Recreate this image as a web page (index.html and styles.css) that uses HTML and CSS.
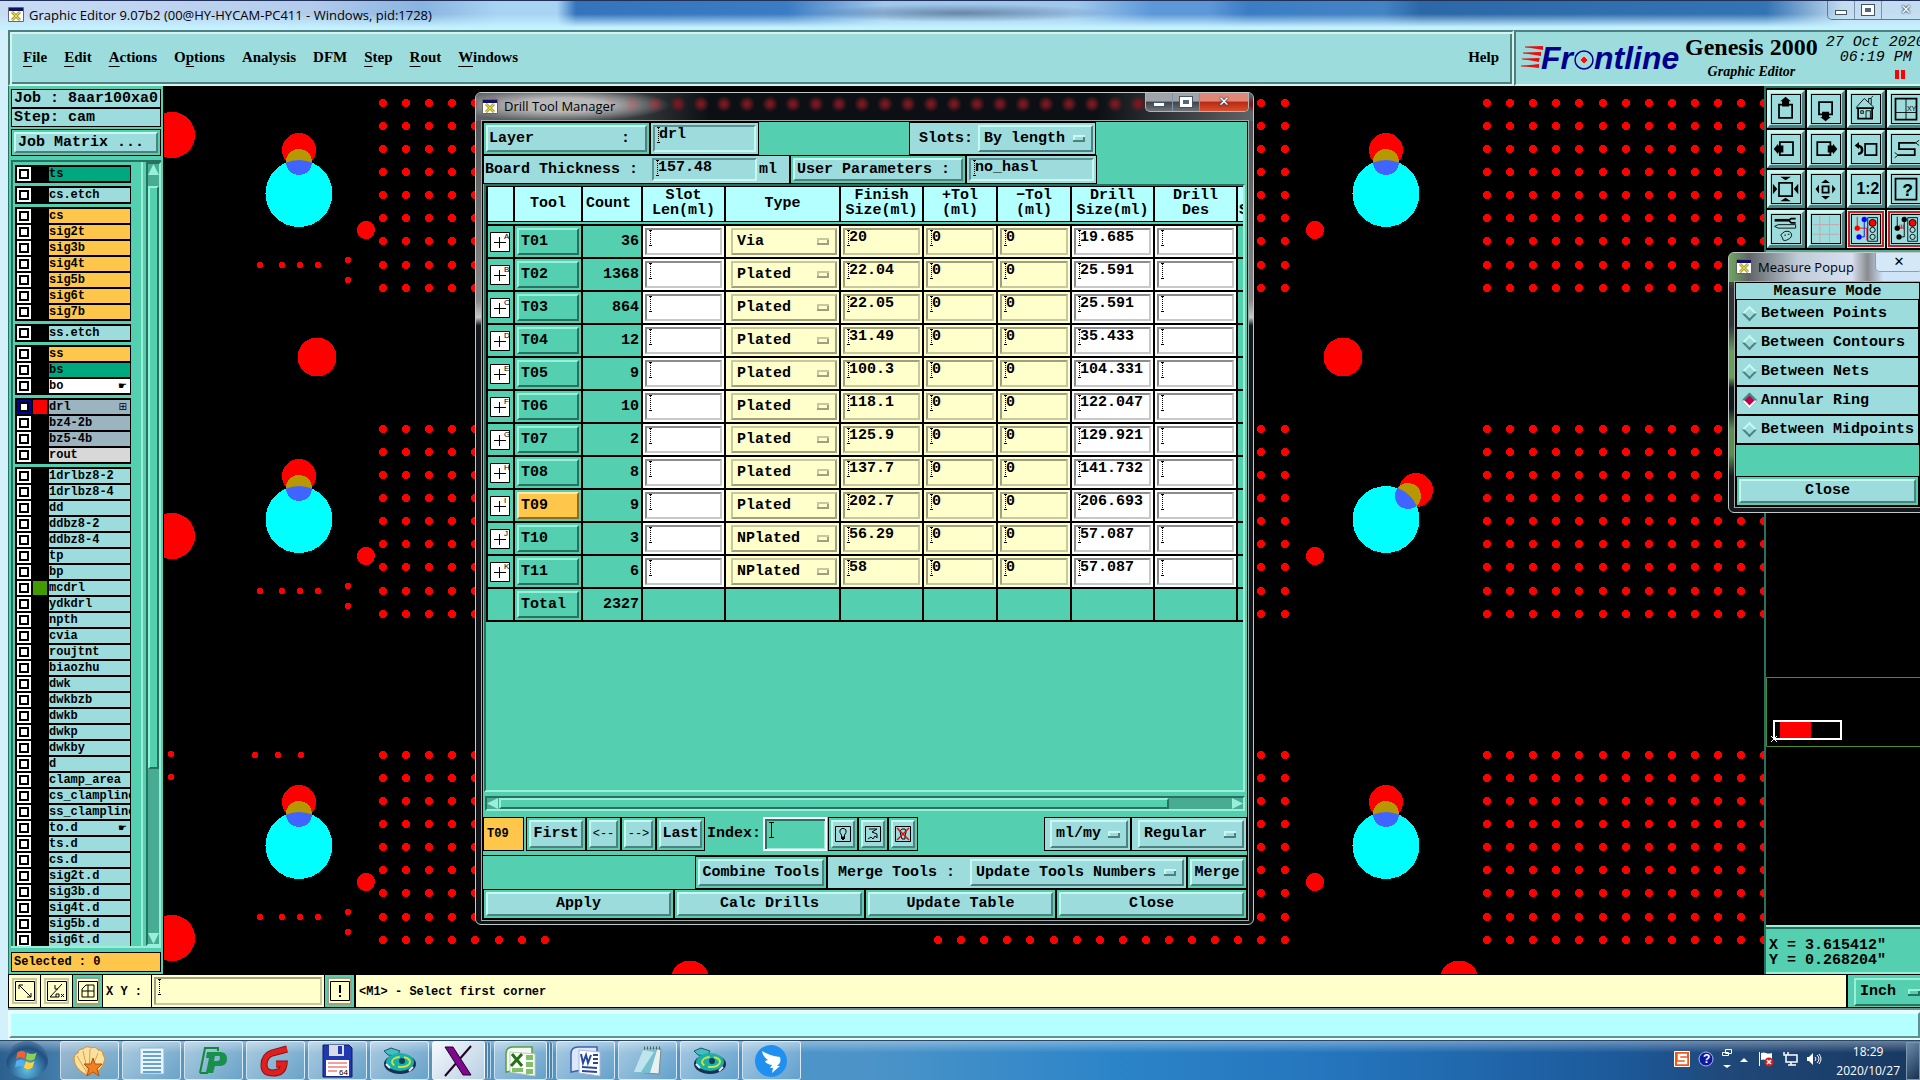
FILE: index.html
```html
<!DOCTYPE html>
<html lang="en">
<head>
    <meta charset="UTF-8">
    <meta name="viewport" content="width=device-width, initial-scale=1.0">
    <title>Graphic Editor</title>
    <link rel="stylesheet" href="styles.css">
</head>
<body>
    <svg class="defs" aria-hidden="true">
        <symbol id="x-app" viewBox="0 0 16 15">
            <path fill="#fff" stroke="#666" d="M.5.5h15v14H.5z"/>
            <path fill="#10106a" d="M1 1h14v3H1z"/>
            <path stroke="#8c8420" stroke-width="2.6" d="M4 5l8 8M12 5l-8 8"/>
            <path stroke="#e8dc40" stroke-width="1.2" d="M4 5l8 8M12 5l-8 8"/>
        </symbol>
        <symbol id="disc" viewBox="0 0 34 34">
            <path fill="#3fc0c0" stroke="#285070" d="M1 7l7-3 9 3-3 5-9-1z"/>
            <ellipse cx="17" cy="20" rx="16" ry="10" fill="#1c2c50"/>
            <ellipse cx="17" cy="18" rx="14" ry="9" fill="#18b0a8"/>
            <ellipse cx="18" cy="18" rx="9" ry="5" fill="none" stroke="#d0e040" stroke-width="2" stroke-dasharray="14 4"/>
            <circle cx="19" cy="17" r="3" fill="#0c4060"/>
            <path stroke="#e8e8f8" stroke-width="2" d="M3 20l4 4M26 27l4-4"/>
        </symbol>
    </svg>

    <header class="titlebar">
        <svg class="app-icon"><use href="#x-app"/></svg>
        <span>Graphic Editor 9.07b2 (00@HY-HYCAM-PC411 - Windows, pid:1728)</span>
        <div class="win-buttons">
            <button aria-label="Minimize"><i class="min"></i></button>
            <button aria-label="Maximize"><i class="max"></i></button>
            <button class="wide" aria-label="Close">✕</button>
        </div>
    </header>

    <div class="editor">
        <div class="top">
            <nav class="menubar">
                <a href="#"><u>F</u>ile</a>
                <a href="#"><u>E</u>dit</a>
                <a href="#"><u>A</u>ctions</a>
                <a href="#">O<u>p</u>tions</a>
                <a href="#">Analysis</a>
                <a href="#">DFM</a>
                <a href="#"><u>S</u>tep</a>
                <a href="#"><u>R</u>out</a>
                <a href="#"><u>W</u>indows</a>
                <a href="#" class="help">Help</a>
            </nav>
            <div class="brand">
                <svg class="logo" width="164" height="44" viewBox="0 0 164 44">
                    <g fill="#e81010">
                        <path d="M22 9v4l-18-3zM20 15v4l-18-3zM18 21v4l-17-3zM18 27v4l-18-2z"/>
                        <path d="M4 9h18v2H4zM2 15h18v2H2zM1 21h18v2H1zM0 28h18v2H0z" opacity=".5"/>
                    </g>
                    <g fill="#00008c" class="logo-text">
                        <text x="20" y="32">Fr</text>
                        <text x="73" y="32">ntline</text>
                    </g>
                    <circle cx="63" cy="23" r="9" fill="none" stroke="#00008c" stroke-width="1.5"/>
                    <path fill="#f01010" stroke="#fff" stroke-width=".5" d="M63 19l4 4-4 4-4-4z"/>
                </svg>
                <div class="product">
                    <strong>Genesis 2000</strong>
                    <em>Graphic Editor</em>
                </div>
                <div class="clock">
                    <span>27 Oct 2020</span>
                    <span>06:19 PM</span>
                    <i class="pause"></i>
                </div>
            </div>
        </div>

        <main class="main">
            <aside class="sidebar">
                <div class="info">Job : 8aar100xa0</div>
                <div class="info">Step: cam</div>
                <div class="matrix"><button class="btn">Job Matrix ...</button></div>
                <div class="layers">
                    <div class="layer-list" id="layer-list"></div>
                    <div class="vscroll"><i class="arrow up"></i><i class="thumb"></i><i class="arrow down"></i></div>
                </div>
                <div class="info selected">Selected : 0</div>
            </aside>

            <svg class="board"><g id="board" transform="translate(-164 -86)"></g></svg>

            <aside class="right">
                <div class="tools">
                    <button aria-label="Pan up"><svg viewBox="0 0 32 32"><path class="t2" d="M8 11h15v15H8z"/><path d="M15.500 2l6 5h-2v6h-8V7h-2z"/></svg></button>
                    <button aria-label="Pan down"><svg viewBox="0 0 32 32"><path class="t2" d="M8 8h15v14H8z"/><path d="M15.500 30l6-5h-2v-6h-8v6h-2z"/></svg></button>
                    <button aria-label="Home"><svg viewBox="0 0 32 32"><path class="t2" d="M7 15v12h16V15M5 15h20"/><path class="t1" d="M5 14L14 4l11 10M19 8V4h3v7M22 3l2-2M10 18h3v3h-3zM16 27v-9h5v9"/></svg></button>
                    <button aria-label="Coordinates"><svg viewBox="0 0 32 32"><path class="t2" d="M4 4h24v24H4z"/><path class="t1" d="M16 4v24M4 20h24"/><text x="17" y="18" class="tiny">XY</text></svg></button>
                    <button aria-label="Pan left"><svg viewBox="0 0 32 32"><path class="t2" d="M9 8h15v15H9z"/><path d="M2 16l5-6v2h6v8H7v2z"/></svg></button>
                    <button aria-label="Pan right"><svg viewBox="0 0 32 32"><path class="t2" d="M6 8h15v15H6z"/><path d="M29 16l-5-6v2h-6v8h6v2z"/></svg></button>
                    <button aria-label="Previous"><svg viewBox="0 0 32 32"><path class="t2" d="M15 10h13v13H15z"/><path d="M3 12l5-4v3q5 1 5 6t-6 6v-3q3 0 3-3t-2-3v2z"/></svg></button>
                    <button aria-label="Serpentine"><svg viewBox="0 0 32 32"><path class="t2" d="M27 9H8v7h18v7H7"/><path class="t1" d="M3 20l4 3-4 3M31 6l-4 3 4 3"/></svg></button>
                    <button aria-label="Zoom in"><svg viewBox="0 0 32 32"><path class="t2" d="M8 9h15v15H8z"/><path d="M15.500 6l-6-4h12zM15.500 26l-6 4h12zM6 16l-5-6v12zM25 16l5-6v12z"/></svg></button>
                    <button aria-label="Zoom out"><svg viewBox="0 0 32 32"><path class="t2" d="M12 13h7v7h-7z"/><path d="M15.500 5l5 4h-10zM15.500 28l5-4h-10zM4 16l4-5v10zM27 16l-4-5v10z"/></svg></button>
                    <button aria-label="Scale"><svg viewBox="0 0 32 32"><text x="5" y="22" class="ratio">1:2</text></svg></button>
                    <button aria-label="Query"><svg viewBox="0 0 32 32"><path class="t2" d="M4 4h24v24H4z"/><text x="12" y="24" class="query">?</text></svg></button>
                    <button aria-label="Settings"><svg viewBox="0 0 32 32"><path class="t3" d="M3 6h16"/><path class="t2" d="M27 4h-5l-3 2 3 3h5"/><path class="t1" d="M3 13l4-2h20v4H7zM10 23q4-6 10-4 5 4 0 8-8 5-8-1zM14 23h2M18 22h2"/></svg></button>
                    <button aria-label="Grid"><svg viewBox="0 0 32 32"><path class="pink" d="M9 1v30M20 1v30M1 11h30M1 22h30"/></svg></button>
                    <button class="red" aria-label="Net on"><svg viewBox="0 0 32 32"><path fill="none" stroke="#00f" d="M14 5v20H8"/><path fill="none" stroke="red" d="M6 2v13h11v14"/><g fill="#00f"><circle cx="14" cy="5" r="3"/><circle cx="8" cy="25" r="3"/></g><circle cx="6" cy="15" r="3" fill="red"/><path class="t1" d="M18 3h11v27H18z"/><circle cx="23.500" cy="9" r="4" fill="red" stroke="#000"/><circle class="t1" cx="23.500" cy="17" r="3"/><circle class="t1" cx="23.500" cy="25" r="3"/></svg></button>
                    <button class="red" aria-label="Net off"><svg viewBox="0 0 32 32"><path class="t1" d="M14 5v20H8M6 2v13"/><path fill="none" stroke="red" d="M8 15h6M9 11v4M11 11v4M13 11v4"/><circle cx="14" cy="5" r="3"/><circle cx="8" cy="25" r="3"/><circle cx="6" cy="15" r="3"/><path class="t1" d="M18 3h11v27H18z"/><circle cx="23.500" cy="9" r="4" fill="red" stroke="#000"/><circle class="t1" cx="23.500" cy="17" r="3"/><circle class="t1" cx="23.500" cy="25" r="3"/></svg></button>
                </div>
                <div class="overview">
                    <svg class="mini" viewBox="0 0 154 70">
                        <path fill="none" stroke="#4c8c30" d="M200 .500H.500v69H200"/>
                        <path fill="red" d="M14 45h31v16H14z"/>
                        <path fill="none" stroke="#fff" stroke-width="2" d="M8 44h67v18H8z"/>
                        <path stroke="#fff" d="M5 59l6 6M11 59l-6 6"/>
                    </svg>
                </div>
                <div class="coords">
                    <span>X = 3.615412"</span>
                    <span>Y = 0.268204"</span>
                </div>
            </aside>
        </main>

        <div class="statusbar">
            <button class="sq" aria-label="Snap"><svg viewBox="0 0 20 20"><path class="t1" d="M.5.5h19v19H.5zM4 8V4h4M4 4l12 12M12 16h4v-4"/></svg></button>
            <button class="sq" aria-label="Angle"><svg viewBox="0 0 20 20"><path class="t1" d="M.5.5h19v19H.5zM3 16L15 3M3 16h6M8 4v4h3M9 16v-3h3v3zM14 13l3 3M17 13l-3 3"/></svg></button>
            <button class="sq on" aria-label="Grid snap"><svg viewBox="0 0 20 20"><path class="t1" d="M.5.5h19v19H.5zM4 16V8l4-4h8v12zM10 4v12M4 10h12"/></svg></button>
            <label for="xy">X Y :</label>
            <div class="xy-cell"><input id="xy" class="inset caret"></div>
            <button class="sq on" aria-label="Alert"><svg viewBox="0 0 20 20"><path class="t1" d="M.5.5h19v19H.5z"/><path d="M9 4h2v8H9zM9 14h2v2H9z"/></svg></button>
            <div class="message">&lt;M1&gt; - Select first corner</div>
            <div class="unit"><select class="opt green" aria-label="Unit"><option>Inch</option></select></div>
        </div>
        <div class="progress"><div></div></div>
    </div>

    <section class="window drill">
        <div class="win-title">
            <svg class="app-icon"><use href="#x-app"/></svg>
            <span>Drill Tool Manager</span>
            <div class="win-buttons dark-glass">
                <button aria-label="Minimize"><i class="min"></i></button>
                <button aria-label="Maximize"><i class="max"></i></button>
                <button class="wide close" aria-label="Close">✕</button>
            </div>
        </div>
        <div class="win-body">
            <div class="row row-layer">
                <div class="cell g layer-cell"><button class="btn split"><span>Layer</span><span>:</span></button></div>
                <div class="cell layer-input"><input class="inset caret" value="drl" aria-label="Layer"></div>
                <div class="cell slots"><label for="slots">Slots:</label><select id="slots" class="opt"><option>By length</option></select></div>
            </div>
            <div class="row row-board">
                <div class="cell thick"><label for="thick">Board Thickness :</label><input id="thick" class="inset caret" value="157.48"><span>ml</span></div>
                <div class="cell g params"><button class="btn">User Parameters :</button></div>
                <div class="cell params-input"><input class="inset caret" value="no_hasl" aria-label="User parameters"></div>
            </div>
            <div class="table-wrap">
                <table>
                    <colgroup>
                        <col class="c-sym"><col class="c-tool"><col class="c-count"><col class="c-slot"><col class="c-type">
                        <col class="c-slot"><col class="c-tol"><col class="c-tol"><col class="c-slot"><col class="c-slot"><col class="c-last">
                    </colgroup>
                    <thead>
                        <tr>
                            <th></th><th>Tool</th><th class="left">Count</th><th>Slot<br>Len(ml)</th><th>Type</th><th>Finish<br>Size(ml)</th>
                            <th>+Tol<br>(ml)</th><th>−Tol<br>(ml)</th><th>Drill<br>Size(ml)</th><th>Drill<br>Des</th><th class="cut">&nbsp;<br>S</th>
                        </tr>
                    </thead>
                    <tbody id="tools-body"></tbody>
                </table>
            </div>
            <div class="hscroll"><i class="arrow lt"></i><i class="thumb"></i><i class="arrow rt"></i></div>
            <div class="row row-nav">
                <div class="current">T09</div>
                <div class="cell g first"><button class="btn">First</button></div>
                <div class="cell g step"><button class="btn thin">&lt;--</button></div>
                <div class="cell g step"><button class="btn thin">--&gt;</button></div>
                <div class="cell g last"><button class="btn">Last</button></div>
                <label for="index">Index:</label>
                <input id="index" class="index">
                <div class="cell g ico"><button class="btn" aria-label="Highlight"><svg viewBox="0 0 16 16"><path class="t1" d="M.5.5h15v15H.5zM6.500 11V9L5 6.500V4l2-1.500h2L11 4v2.500L9.500 9v2z"/><path d="M6 11h4v2H9v1H7v-1H6z"/></svg></button></div>
                <div class="cell g ico"><button class="btn" aria-label="Select"><svg viewBox="0 0 16 16"><path class="t1" d="M.5.5h15v15H.5zM4 3h8L7 6l5 2v4l-2-2-2 3-2-2-3 2"/></svg></button></div>
                <div class="cell g ico"><button class="btn" aria-label="Clear highlight"><svg viewBox="0 0 16 16"><path class="t1" d="M.5.5h15v15H.5zM6 10L5 5l2-2h3l1 3-1 4v3H7z"/><path stroke="#e01010" stroke-width="1.500" d="M2 2l12 12M14 2L2 14"/></svg></button></div>
                <div class="cell push unit-cell"><select class="opt" aria-label="Units"><option>ml/my</option></select></div>
                <div class="cell mode-cell"><select class="opt" aria-label="Mode"><option>Regular</option></select></div>
            </div>
            <div class="row row-merge">
                <div class="cell g combine"><button class="btn">Combine Tools</button></div>
                <div class="cell merge-cell"><label for="merge">Merge Tools :</label><select id="merge" class="opt"><option>Update Tools Numbers</option></select></div>
                <div class="cell g merge-btn"><button class="btn">Merge</button></div>
            </div>
            <div class="row row-actions">
                <div class="cell g"><button class="btn">Apply</button></div>
                <div class="cell g"><button class="btn">Calc Drills</button></div>
                <div class="cell g"><button class="btn">Update Table</button></div>
                <div class="cell g"><button class="btn">Close</button></div>
            </div>
        </div>
    </section>

    <section class="window measure">
        <div class="win-title">
            <svg class="app-icon"><use href="#x-app"/></svg>
            <span>Measure Popup</span>
            <button class="x" aria-label="Close">✕</button>
        </div>
        <div class="win-body">
            <h2>Measure Mode</h2>
            <label><input type="radio" name="mode">Between Points</label>
            <label><input type="radio" name="mode">Between Contours</label>
            <label><input type="radio" name="mode">Between Nets</label>
            <label><input type="radio" name="mode" checked>Annular Ring</label>
            <label><input type="radio" name="mode">Between Midpoints</label>
            <div class="cell g close-cell"><button class="btn">Close</button></div>
        </div>
    </section>

    <footer class="taskbar">
        <button class="start" aria-label="Start"><svg viewBox="0 0 24 24"><path fill="#f06030" d="M3 5q4-3 8 0l-1 6q-4-3-8 0z"/><path fill="#90d050" d="M12 5q4 3 9 0l-2 6q-4 3-8 0z"/><path fill="#50b0f0" d="M2 13q4-3 8 0l-1 6q-4-3-8 0z"/><path fill="#fcd040" d="M11 13q4 3 8 0l-2 6q-4 3-8 0z"/></svg></button>
        <button class="task" aria-label="Shell"><svg viewBox="0 0 34 34"><path fill="#fbe0a0" stroke="#d89030" d="M12 30Q1 24 1 14q0-4 4-5 0-4 5-4 4-4 8-1 5-2 7 2 5 0 5 5 3 3 1 7-3 9-12 12z"/><path stroke="#e0a040" fill="none" d="M14 29L4 12M15 29L10 7M16 29L17 5M17 29l8-20"/><path fill="#f08020" stroke="#b05010" d="M20 14l2 6h7l-5 5 2 7-6-4-6 4 2-7-5-5h7z"/></svg></button>
        <button class="task" aria-label="Text document"><svg viewBox="0 0 34 34"><path fill="#e8f4fc" stroke="#88b8d8" d="M5 4h24v26H5z"/><path stroke="#4088b8" stroke-width="1.500" d="M8 8h18M8 12h18M8 16h18M8 20h18M8 24h18M8 28h18"/></svg></button>
        <button class="task" aria-label="P tool"><svg viewBox="0 0 34 34"><path fill="none" stroke="#108838" stroke-width="2" d="M3 29L8 4h13v3M3 29h7l1-4"/><path fill="#18904a" d="M10 8h13q7 0 7 7t-7 7h-5l-2 7h-7l3-15h-3zM18 12l-1 5h3q3 0 3-3t-2-2z"/></svg></button>
        <button class="task" aria-label="G tool"><svg viewBox="0 0 34 34"><path fill="none" stroke="#901010" stroke-width="7" d="M28 5L13 9q-8 3-8 12 0 8 9 8 10 0 11-9h-8"/><path fill="none" stroke="#e02020" stroke-width="5" d="M28 5L13 9q-8 3-8 12 0 8 9 8 10 0 11-9h-8"/></svg></button>
        <button class="task" aria-label="Save"><svg viewBox="0 0 34 34"><path fill="#2038b0" stroke="#101860" d="M2 1h26l3 3v29H2z"/><path fill="#d8dce8" d="M8 1h15v11H8z"/><path fill="#2038b0" d="M17 2h4v8h-4z"/><path fill="#fff" d="M5 16h23v16H5z"/><path stroke="#e04040" d="M7 19h19M7 23h19M7 27h9"/><text x="18" y="31" class="tiny">64</text></svg></button>
        <button class="task" aria-label="CAM disc"><svg><use href="#disc"/></svg></button>
        <button class="task active stack" aria-label="X server"><svg viewBox="0 0 34 34"><path stroke="#200020" stroke-width="2" d="M29 2L3 32"/><path fill="#800890" stroke="#200020" d="M3 3h8l18 28h-8z"/></svg></button>
        <button class="task stack" aria-label="Excel"><svg viewBox="0 0 34 34"><path fill="#f4faf0" stroke="#58a040" stroke-width="1.500" d="M2 28V10q0-7 7-7h19v20z"/><path fill="#fff" stroke="#b8d0b0" d="M6 8l25 2v22L6 28z"/><path fill="#80c068" d="M22 11h7v5h-7zM22 18h7v5h-7zM22 25h7v5h-7zM8 24h11v4H8z"/><path stroke="#287018" stroke-width="3" d="M8 10l10 12M18 10L7 22"/></svg></button>
        <button class="task" aria-label="Word"><svg viewBox="0 0 34 34"><path fill="#dce8fa" stroke="#4060b0" stroke-width="1.500" d="M2 28V10q0-7 7-7h19v20z"/><path fill="#fff" stroke="#a8b8d8" d="M10 6l21 2v24l-21-3z"/><path fill="none" stroke="#2848a0" stroke-width="2" d="M12 10l2 9 3-8 2 8 3-8M24 11h5M24 15h5M24 19h5M13 23l15 1M13 27l15 1"/></svg></button>
        <button class="task" aria-label="Notepad"><svg viewBox="0 0 34 34"><path fill="#e8f0f0" stroke="#808888" d="M13 5h17l-2 25-15-1z"/><path fill="#78c0d0" d="M12 6h14L19 29H3z"/><path fill="#c0e4ec" d="M12 6l11 2-13 20H3z"/><path stroke="#506060" stroke-dasharray="1 2" stroke-width="3" d="M13 4h17"/></svg></button>
        <button class="task" aria-label="CAM disc 2"><svg><use href="#disc"/></svg></button>
        <button class="task" aria-label="Messenger"><svg viewBox="0 0 34 34"><circle cx="16" cy="17" r="16" fill="#2090f0"/><path fill="#fff" d="M7 7q8 5 18 6 2 5-3 9h3l-8 7 1-5h-3l2-3q-6-1-7-4l3-1q-5-3-6-9z"/></svg></button>

        <div class="tray">
            <svg width="16" height="16" viewBox="0 0 16 16"><path fill="#f05818" stroke="#fff" d="M.5.5h15v15H.5z"/><path fill="none" stroke="#fff" stroke-width="2.500" d="M13 4H5v4h7v4H3"/></svg>
            <svg width="16" height="16" viewBox="0 0 16 16"><circle cx="8" cy="8" r="7" fill="#1018a0" stroke="#b0b8f0"/><text x="5" y="12" class="tray-q">?</text></svg>
            <svg width="10" height="22" viewBox="0 0 10 22"><path fill="none" stroke="#fff" d="M3.500 1.500h6v4h-6zM.500 4.500h6v3h-6z"/><path fill="#fff" d="M1 17h8l-4 3z"/></svg>
            <svg width="8" height="12" viewBox="0 0 8 12"><path fill="#fff" d="M0 9l4-4 4 4z"/></svg>
            <svg class="flag" width="16" height="16" viewBox="0 0 16 16"><path fill="#fff" d="M1 1h1v14H1zM3 2q3-1 5 0t6 0v7q-3 1-6 0t-5 0z"/><circle cx="11" cy="11" r="4.500" fill="#d02020"/><path stroke="#fff" stroke-width="1.500" d="M9 9l4 4M13 9l-4 4"/></svg>
            <svg width="16" height="16" viewBox="0 0 16 16"><path fill="none" stroke="#fff" stroke-width="1.500" d="M6 4h9v7H4V7M2 1v3h4V1M4 4v4M9 11v3M6 14h8"/></svg>
            <svg width="16" height="16" viewBox="0 0 16 16"><path fill="#fff" d="M1 6h2l4-4v12l-4-4H1z"/><path fill="none" stroke="#fff" d="M9 6q2 2 0 4M11 4q4 4 0 8M13 3q4 5 0 10"/></svg>
            <div class="time"><span>18:29</span><span>2020/10/27</span></div>
            <button class="peek" aria-label="Show desktop"></button>
        </div>
    </footer>

    <script>
        // Layer list, one array per block: name:colour:mark
        const groups = [
            ['ts:dark'],
            ['cs.etch:aqua'],
            ['cs:amber', 'sig2t:amber', 'sig3b:amber', 'sig4t:amber', 'sig5b:amber', 'sig6t:amber', 'sig7b:amber'],
            ['ss.etch:aqua'],
            ['ss:amber', 'bs:dark', 'bo:white:☛'],
            ['drl:steel:⊞', 'bz4-2b:steel', 'bz5-4b:steel', 'rout:grey'],
            ['1drlbz8-2', '1drlbz8-4', 'dd', 'ddbz8-2', 'ddbz8-4', 'tp', 'bp', 'mcdrl', 'ydkdrl', 'npth', 'cvia', 'roujtnt',
             'biaozhu', 'dwk', 'dwkbzb', 'dwkb', 'dwkp', 'dwkby', 'd', 'clamp_area', 'cs_clampline', 'ss_clampline',
             'to.d:aqua:☛', 'ts.d', 'cs.d', 'sig2t.d', 'sig3b.d', 'sig4t.d', 'sig5b.d', 'sig6t.d']
        ];

        document.getElementById('layer-list').innerHTML = groups.map(group => `
            <div class="group">${group.map(item => {
                const [name, color = 'aqua', mark = ''] = item.split(':');
                return `<label class="layer l-${name.replace('.', '-')}"><input type="checkbox"><i></i>` +
                    `<span class="name ${color}">${name}</span>${mark ? `<b>${mark}</b>` : ''}</label>`;
            }).join('')}</div>
        `).join('');

        // Drill table
        const tools = [
            ['T01', 36, 'Via', '20', '19.685'],
            ['T02', 1368, 'Plated', '22.04', '25.591'],
            ['T03', 864, 'Plated', '22.05', '25.591'],
            ['T04', 12, 'Plated', '31.49', '35.433'],
            ['T05', 9, 'Plated', '100.3', '104.331'],
            ['T06', 10, 'Plated', '118.1', '122.047'],
            ['T07', 2, 'Plated', '125.9', '129.921'],
            ['T08', 8, 'Plated', '137.7', '141.732'],
            ['T09', 9, 'Plated', '202.7', '206.693'],
            ['T10', 3, 'NPlated', '56.29', '57.087'],
            ['T11', 6, 'NPlated', '58', '57.087']
        ];
        const field = (value, label, cls = '') =>
            `<td class="${cls}"><input class="inset caret" value="${value}" aria-label="${label}"></td>`;

        document.getElementById('tools-body').innerHTML = tools.map(([tool, count, type, finish, drill], i) => `
            <tr>
                <td><svg class="sym" viewBox="0 0 20 20"><path fill="#fff" stroke="#000" d="M.5.5h19v19H.5z"/>
                    <path stroke="#000" d="M4 10.500h12M9.500 5v11"/><text x="14" y="7" class="tiny">${'ABCDEFGHIJK'[i]}</text></svg></td>
                <td><button class="btn green ${tool === 'T09' ? 'current-tool' : ''}">${tool}</button></td>
                <td class="count">${count}</td>
                ${field('', 'Slot length', 'white')}
                <td class="cream type"><select class="opt cream" aria-label="Type"><option>${type}</option></select></td>
                ${field(finish, 'Finish size', 'cream')}${field('0', 'Plus tolerance', 'cream')}${field('0', 'Minus tolerance', 'cream')}
                ${field(drill, 'Drill size', 'white')}${field('', 'Drill des', 'white')}<td></td>
            </tr>
        `).join('') + `
            <tr><td></td><td><button class="btn green">Total</button></td><td class="count">2327</td>
            ${'<td></td>'.repeat(8)}</tr>`;

        // Board: pad arrays, then the large holes
        let art = '';
        const dot = (x, y, r, fill = 'red') => art += `<circle cx="${x}" cy="${y}" r="${r}" fill="${fill}"/>`;
        const blocks = [[383, 8], [938, 16], [1487, 13]];
        for (const top of [103, 429, 755]) {
            for (const [left, cols] of blocks) {
                for (let row = 0; row < 9; row++)
                    for (let col = 0; col < cols; col++)
                        dot(Math.round(left + col * 23.1), Math.round(top + row * 23.08), 4);
            }
        }
        for (const y of [135, 536, 938]) dot(172, y, 23);
        for (const [x, y] of [[317, 357], [1343, 357], [690, 980], [1459, 980]]) dot(x, y, 19.5);
        for (const shift of [0, 326, 652]) {
            for (const x of [299, 1386]) {
                const turned = x === 1386 && shift === 326;
                const [hx, hy] = turned ? [1408, 496] : [x, 162 + shift];
                const cy = 193.5 + shift;
                turned ? dot(1416, 490, 17) : dot(x, 150 + shift, 17);
                dot(x, cy, 33.5, 'cyan');
                dot(hx, hy, 13, '#b89800');
                art += `<clipPath id="c${x}-${shift}"><circle cx="${x}" cy="${cy}" r="33.500"/></clipPath>` +
                    `<circle cx="${hx}" cy="${hy}" r="13" fill="#4064ff" clip-path="url(#c${x}-${shift})"/>`;
            }
            dot(366, 230 + shift, 9);
            dot(1315, 230 + shift, 9);
            for (const x of [260, 282, 300, 318]) dot(x, 265 + shift, 3);
            dot(348, 260 + shift, 3);
            dot(348, 280 + shift, 3);
        }
        for (const [x, y] of [[255, 755], [278, 755], [301, 755], [171, 754], [171, 777]]) dot(x, y, 3);
        document.getElementById('board').innerHTML = art;
    </script>
</body>
</html>
```
FILE: styles.css
```css
:root {
    --aqua: #9cdcdc;
    --green: #54cfb0;
    --cream: #ffffcc;
    --amber: #ffc64c;
    --mono: "Liberation Mono", monospace;
    --ui: "Open Sans", "Noto Sans", sans-serif;
}

* {
    box-sizing: border-box;
}

body {
    margin: 0;
    height: 100vh;
    display: flex;
    flex-direction: column;
    overflow: hidden;
    background: #000;
    color: #000;
    font: bold 15px/18px var(--mono);
}

button, input, select {
    font: inherit;
    color: inherit;
    margin: 0;
    padding: 0;
    border: 0;
    border-radius: 0;
    background: none;
    outline: none;
}

svg {
    display: block;
}

.defs {
    position: absolute;
    width: 0;
    height: 0;
}

.t1, .t2, .t3, .pink {
    fill: none;
    stroke: #000;
}

.t2 {
    stroke-width: 2;
}

.t3 {
    stroke-width: 3;
}

.pink {
    stroke: #c8a0a8;
}

.tiny {
    font: 8px "Liberation Sans", sans-serif;
}

.ratio {
    font: bold 18px "Liberation Sans", sans-serif;
}

.query {
    font: bold 20px var(--mono);
}

/* Main title bar */
.titlebar {
    flex: none;
    height: 30px;
    display: flex;
    align-items: center;
    gap: 5px;
    padding: 0 0 2px 8px;
    border-top: 1px solid #203058;
    font: 13px/20px var(--ui);
    background:
        radial-gradient(ellipse 150px 9px at 50% 12px, rgba(50, 70, 100, .5), transparent),
        linear-gradient(180deg, transparent 45%, #c4f0ff 90%),
        linear-gradient(90deg, #c8dcf4 0, #b4ccec 16%, #88b4e0 22%, #a8d4f4 26%, #a8d4f4 29%, #3474bc 30%, #3c7cc4 41%,
            #a0c8ec 46%, #a0c8ec 56%, #5c98d8 60%, #5c98d8 63%, #3c7cc4 65%, #4484c4 72%, #2c68a8 74%, #3474b4 92%, #c4dcf0 96%);
}

.app-icon {
    width: 16px;
    height: 15px;
    flex: none;
}

.win-buttons {
    display: flex;
    align-self: flex-start;
    margin-left: auto;
    margin-right: -11px;
    height: 19px;
    border: 1px solid #5c7898;
    border-top: 0;
    border-radius: 0 0 5px 5px;
    overflow: hidden;
}

.win-buttons button {
    width: 27px;
    display: flex;
    justify-content: center;
    align-items: center;
    border-right: 1px solid #7c94ac;
}

.win-buttons .wide {
    width: 48px;
    border: 0;
    font: bold 13px/16px "DejaVu Sans", sans-serif;
    color: #fff;
    text-shadow: 0 0 2px #234, 0 0 2px #234;
}

.min {
    width: 12px;
    height: 5px;
    margin-top: 5px;
    background: #fff;
    border: 1px solid #456;
}

.max {
    width: 12px;
    height: 10px;
    background: #567;
    border: 3px solid #fff;
    outline: 1px solid #456;
}

/* Editor frame */
.editor {
    flex: 1;
    min-height: 0;
    display: flex;
    flex-direction: column;
    border-left: 8px solid #d4f0fa;
}

.top {
    flex: none;
    height: 56px;
    display: flex;
    background: var(--aqua);
}

.menubar {
    flex: 1;
    display: flex;
    align-items: center;
    gap: 17px;
    padding: 0 13px 2px;
    border: 2px solid;
    border-color: #4f8080 #d4f4f0 #d4f4f0 #4f8080;
    box-shadow: inset 2px 2px #d4f4f0, inset -2px -2px #4f8080;
    font: bold 15px/20px "Liberation Serif", serif;
}

.menubar a {
    color: inherit;
    text-decoration: none;
}

.menubar u {
    text-underline-offset: 4px;
}

.menubar .help {
    margin-left: auto;
}

.brand {
    flex: none;
    width: 406px;
    display: flex;
    border: 2px solid #4f8080;
    border-right: 0;
    border-bottom-color: #d4f4f0;
    overflow: hidden;
    white-space: nowrap;
}

.logo {
    flex: none;
    margin: 5px 0 0 5px;
}

.logo-text {
    font: italic bold 32px "Liberation Sans", sans-serif;
}

.product {
    width: 133px;
    display: flex;
    flex-direction: column;
    align-items: center;
    font-family: "Liberation Serif", serif;
}

.product strong {
    font-size: 24px;
    line-height: 30px;
}

.product em {
    font-size: 14px;
    line-height: 20px;
}

.clock {
    display: flex;
    flex-direction: column;
    align-items: flex-start;
    padding-top: 3px;
    margin-left: 8px;
    font-style: italic;
    font-weight: normal;
    line-height: 15px;
}

.clock span:nth-child(2) {
    padding-left: 14px;
}

.pause {
    width: 10px;
    height: 9px;
    margin: 5px 0 0 69px;
    border: solid #f00;
    border-width: 0 4px;
}

/* Main area */
.main {
    flex: 1;
    min-height: 0;
    display: flex;
}

.sidebar {
    flex: none;
    width: 155px;
    display: flex;
    flex-direction: column;
    padding: 3px 2px 2px;
    background: var(--green);
    border-left: 1px solid #287060;
    white-space: nowrap;
}

.info {
    height: 19px;
    padding: 0 2px;
    line-height: 18px;
    border: 1px solid #000;
    background: var(--aqua);
    overflow: hidden;
}

.matrix {
    height: 27px;
    margin-top: 2px;
    padding: 2px;
    border: 1px solid #000;
}

.btn {
    display: block;
    width: 100%;
    height: 100%;
    background: var(--aqua);
    border: 2px solid;
    border-color: #c8f8f0 #4f8080 #4f8080 #c8f8f0;
    white-space: nowrap;
    line-height: 16px;
}

.matrix .btn {
    text-align: left;
    padding-left: 2px;
}

.btn.green {
    background: var(--green);
    border-color: #98f0d8 #287060 #287060 #98f0d8;
}

.info.selected {
    height: 20px;
    font-size: 12px;
    background: var(--amber);
}

.layers {
    flex: 1;
    min-height: 0;
    display: flex;
    margin: 4px 0;
    border-top: 2px solid #287060;
    border-bottom: 2px solid #98f0d8;
    overflow: hidden;
}

.layer-list {
    width: 132px;
    padding: 3px 10px 0 2px;
    border-left: 2px solid #287060;
    border-right: 2px solid #98f0d8;
    overflow: hidden;
    font-size: 12px;
    line-height: 14px;
}

.group {
    background: #000;
    padding: 1px 0;
    margin-bottom: 3px;
}

.layer {
    position: relative;
    display: grid;
    grid-template-columns: 14px 14px 81px;
    gap: 2px;
    height: 16px;
    padding: 1px 2px;
}

.layer input {
    appearance: none;
    width: 14px;
    height: 14px;
    background: #fff;
    border: 2px solid #fff;
    box-shadow: inset 0 0 0 2px #000;
}

.layer .name {
    overflow: hidden;
}

.layer b {
    position: absolute;
    right: 4px;
    top: 1px;
    font: 10px/14px "DejaVu Sans", sans-serif;
}

.l-drl input {
    border-color: #00009c;
}

.l-drl i {
    background: #f00;
}

.l-mcdrl i {
    background: #409c00;
}

.aqua { background: var(--aqua); }
.amber { background: var(--amber); }
.dark { background: #00a880; }
.white { background: #fff; }
.steel { background: #9cb4c0; }
.grey { background: #d8d8d8; }

.vscroll, .hscroll {
    display: flex;
    background: #48ac94;
    border: 2px solid;
    border-color: #287060 #98f0d8 #98f0d8 #287060;
}

.vscroll {
    flex-direction: column;
    width: 15px;
    margin-left: 3px;
}

.thumb {
    background: var(--green);
    border: 2px solid;
    border-color: #98f0d8 #287060 #287060 #98f0d8;
}

.vscroll .thumb {
    height: 583px;
    margin-top: 11px;
}

.arrow {
    flex: none;
    width: 11px;
    height: 11px;
    background: #98f0d8;
}

.up { clip-path: polygon(50% 0, 100% 100%, 0 100%); }
.down { clip-path: polygon(0 0, 100% 0, 50% 100%); margin-top: auto; }
.lt { clip-path: polygon(100% 0, 100% 100%, 0 50%); }
.rt { clip-path: polygon(0 0, 100% 50%, 0 100%); margin-left: auto; }

.board {
    flex: 1;
    min-width: 0;
    height: 100%;
    margin-left: 1px;
    shape-rendering: crispEdges;
}

/* Right hand tools */
.right {
    flex: none;
    width: 156px;
    display: flex;
    flex-direction: column;
    border-left: 2px solid #287060;
    overflow: hidden;
}

.tools {
    display: grid;
    grid-template-columns: repeat(4, 38px);
    grid-auto-rows: 38px;
    gap: 2px;
    padding: 2px 0 2px 1px;
    border-top: 2px solid #287060;
    border-bottom: 2px solid #54a898;
}

.tools button {
    padding: 1px;
    background: var(--aqua);
    border: 3px solid;
    border-color: #c8f8f0 #4f8080 #4f8080 #c8f8f0;
}

.tools svg {
    width: 30px;
    height: 30px;
    border: 1px solid #000;
}

.tools .red {
    border-color: #c82020;
    outline: 1px solid #c8f8f0;
    outline-offset: -1px;
}

.overview {
    flex: 1;
    display: flex;
    flex-direction: column;
    justify-content: flex-end;
    padding-bottom: 180px;
}

.mini {
    width: 154px;
    height: 70px;
}

.coords {
    height: 47px;
    display: flex;
    flex-direction: column;
    padding: 9px 3px 0;
    line-height: 15px;
    background: var(--green);
    border-top: 2px solid #287060;
    border-bottom: 2px solid #98f0d8;
    box-shadow: 0 -2px #98f0d8;
}

/* Status bar */
.statusbar {
    flex: none;
    height: 34px;
    display: flex;
    align-items: stretch;
    border: solid #000;
    border-width: 1px 0 1px 1px;
    background: var(--cream);
    font-size: 12px;
}

.sq {
    width: 32px;
    flex: none;
    display: flex;
    align-items: center;
    justify-content: center;
    border-right: 1px solid #000;
    box-shadow: inset 0 0 0 3px var(--cream), inset 0 0 0 5px #c8c8a0;
}

.sq svg {
    width: 20px;
    height: 20px;
}

.sq.on {
    width: 30px;
    box-shadow: inset 0 0 0 2px var(--green), inset 0 0 0 4px #a0a080;
}

.statusbar label {
    width: 48px;
    padding-left: 3px;
    line-height: 34px;
}

.xy-cell {
    width: 174px;
    padding: 2px;
    border: solid #000;
    border-width: 0 1px;
}

.xy-cell .inset {
    border-color: #a0a080 #c8c8a0 #c8c8a0 #a0a080;
}

.message {
    flex: 1;
    padding-left: 3px;
    line-height: 34px;
    border-left: 1px solid #000;
}

.unit {
    flex: none;
    width: 74px;
    padding: 3px 0 1px 6px;
    background: var(--green);
    border-left: 2px solid #000;
    font-size: 15px;
    overflow: hidden;
}

.progress {
    flex: none;
    height: 32px;
    padding: 2px 0 3px 1px;
    border-top: 2px solid #6c8c88;
    background: #e8fcff;
}

.progress div {
    height: 26px;
    background: #b4ffff;
    border: 2px solid;
    border-color: #e0ffff #609090 #609090 #e0ffff;
}

/* Shared fields */
.inset {
    display: block;
    width: 100%;
    height: 100%;
    padding: 0 0 8px 4px;
    border: 2px solid;
    border-color: #5f9090 #c8f8f0 #c8f8f0 #5f9090;
    background-color: transparent;
}

.caret {
    background-image: repeating-linear-gradient(#000 0 1px, transparent 1px 2px),
        linear-gradient(#000, #000), linear-gradient(#000, #000);
    background-size: 1px 15px, 3px 1px, 3px 1px;
    background-position: 3px 1px, 2px 0, 2px 15px;
    background-repeat: no-repeat;
}

.opt {
    --hi: #c8f8f0;
    --lo: #4f8080;
    --face: var(--aqua);
    appearance: none;
    display: block;
    height: 100%;
    padding: 0 0 0 4px;
    border: 2px solid;
    border-color: var(--hi) var(--lo) var(--lo) var(--hi);
    background:
        linear-gradient(var(--face), var(--face)) right 8px center / 8px 3px no-repeat,
        linear-gradient(165deg, var(--hi) 50%, var(--lo) 50%) right 6px center / 12px 7px no-repeat,
        var(--face);
}

.opt.green {
    --hi: #98f0d8;
    --lo: #287060;
    --face: var(--green);
    width: 74px;
}

.opt.cream {
    --hi: #c8c8a0;
    --lo: #a0a080;
    --face: var(--cream);
    width: 100%;
}

/* Floating windows */
.window {
    position: absolute;
    display: flex;
    flex-direction: column;
    border: 1px solid #c0c8c8;
    border-radius: 6px;
}

.win-title {
    flex: none;
    display: flex;
    align-items: center;
    font: 13px/20px var(--ui);
}

.win-body {
    flex: 1;
    min-height: 0;
    display: flex;
    flex-direction: column;
    background: var(--green);
    border: 1px solid #000;
    outline: 1px solid #a0a8a8;
}

.drill {
    left: 475px;
    top: 92px;
    width: 779px;
    height: 833px;
    padding: 0 5px 4px 6px;
    background: linear-gradient(#484c50 0, #888 25%, #c8c8c8 27%, #14181c 28%, #101418 100%);
}

.drill .win-title {
    height: 28px;
    gap: 6px;
    margin: 0 -5px 0 -6px;
    padding: 0 0 2px 6px;
    border-radius: 5px 5px 0 0;
    background:
        radial-gradient(ellipse 110px 17px at 85px 12px, #b8b8b8 40%, transparent),
        radial-gradient(circle at 11px 11px, #781820 2px, transparent 8px) 145px 0 / 23px 28px,
        linear-gradient(90deg, #606468 0, #383c40 20%, #0c1014 30%, #0c1014 80%, #606468 100%);
}

.win-buttons.dark-glass {
    margin-right: 4px;
    border-color: #b0b4b8;
    background: linear-gradient(#a0a4a8 45%, #404448 50%, #707478);
}

.win-buttons .close {
    background: linear-gradient(#e08878 45%, #b82810 50%, #d85030);
}

.row {
    flex: none;
    display: flex;
    white-space: nowrap;
}

.cell {
    display: flex;
    align-items: center;
    padding: 2px;
    border: 1px solid #000;
    background: var(--aqua);
}

.cell.g {
    background: var(--green);
}

.row-layer { height: 33px; }
.row-board { height: 29px; }
.row-nav { height: 34px; }
.row-merge { height: 34px; margin-top: 4px; }
.row-actions { height: 30px; }

.layer-cell { width: 167px; }
.layer-input { width: 109px; }
.params { width: 176px; }
.params-input { width: 131px; }

.split {
    display: flex;
    justify-content: space-between;
    align-items: center;
    padding: 0 15px 0 1px;
}

.slots {
    width: 187px;
    margin-left: 150px;
    padding-left: 9px;
    justify-content: space-between;
}

.slots .opt {
    width: 115px;
}

.thick {
    width: 307px;
    padding-left: 1px;
}

.thick label {
    width: 167px;
}

.thick .inset {
    width: 105px;
    margin-right: 2px;
}

.thick .inset, .params-input .inset {
    padding-bottom: 4px;
}

.params .btn {
    text-align: left;
    padding-left: 2px;
}

/* Drill table */
.table-wrap {
    flex: 1;
    min-height: 0;
    margin: 0 2px 0 1px;
    border: 2px solid;
    border-color: #287060 #98f0d8 #98f0d8 #287060;
    overflow: hidden;
}

table {
    width: 781px;
    table-layout: fixed;
    border-collapse: separate;
    border-spacing: 0;
    border-left: 2px solid #000;
}

.c-sym { width: 27px; }
.c-tool { width: 68px; }
.c-count { width: 60px; }
.c-slot { width: 83px; }
.c-type { width: 115px; }
.c-tol { width: 74px; }
.c-last { width: 30px; }

th {
    height: 36px;
    padding: 0 0 2px;
    line-height: 15px;
    background: #b4ffff;
    border: solid #000;
    border-width: 1px 2px 1px 0;
}

th.left, th.cut {
    text-align: left;
    padding-left: 3px;
}

th.cut {
    padding-left: 1px;
}

tbody::before {
    content: "";
    display: block;
    height: 2px;
}

tr:first-child td {
    border-top: 2px solid #000;
}

td {
    height: 33px;
    padding: 2px;
    border: solid #000;
    border-width: 0 2px 2px 0;
}

tr:first-child td {
    height: 35px;
}

td .btn, td .inset {
    height: 27px;
}

td .opt {
    height: 27px;
}

td .btn {
    text-align: left;
    padding-left: 2px;
}

.count {
    text-align: right;
}

td.cream {
    background: var(--cream);
}

td.type {
    padding-left: 5px;
}

td.white .inset {
    border-color: #8c8c8c #c8c8c8 #c8c8c8 #8c8c8c;
}

td.cream .inset {
    border-color: #a0a080 #c8c8a0 #c8c8a0 #a0a080;
}

.btn.current-tool {
    background: var(--amber);
    border-color: #ffe8b0 #8c6c28 #8c6c28 #ffe8b0;
}

.sym {
    width: 20px;
    height: 20px;
}

.hscroll {
    flex: none;
    height: 15px;
    margin: 4px 2px 6px;
}

.hscroll .thumb {
    width: 670px;
    margin-left: 1px;
}

/* Bottom controls */
.current {
    width: 41px;
    margin-right: 2px;
    padding-left: 3px;
    font-size: 12px;
    line-height: 32px;
    background: var(--amber);
    border: 1px solid #000;
}

.first { width: 60px; }
.step { width: 35px; }
.last { width: 49px; }
.ico { width: 30px; }

.thin {
    font-weight: normal;
    font-size: 12px;
}

.row-nav label {
    width: 58px;
    padding-left: 2px;
    line-height: 34px;
}

.index {
    width: 64px;
    margin-right: 1px;
    padding: 0 0 6px 6px;
    border: 2px solid #fff;
    box-shadow: inset 2px 2px #287060, inset -1px -1px #98f0d8;
    background: linear-gradient(#000, #000) 6px 4px / 1px 14px no-repeat,
        linear-gradient(#000, #000) 4px 3px / 5px 1px no-repeat,
        linear-gradient(#000, #000) 4px 18px / 5px 1px no-repeat;
}

.ico svg {
    width: 16px;
    height: 16px;
    margin: auto;
}

.push {
    margin-left: auto;
}

.unit-cell {
    width: 87px;
    padding-left: 5px;
}

.unit-cell .opt {
    width: 100%;
}

.mode-cell {
    width: 116px;
    padding-left: 6px;
}

.mode-cell .opt {
    width: 100%;
}

.row-merge {
    justify-content: flex-end;
    border-top: 1px solid #000;
}

.combine {
    width: 132px;
}

.merge-cell {
    width: 360px;
    padding-left: 10px;
    justify-content: space-between;
}

.merge-cell .opt {
    width: 214px;
}

.merge-btn {
    width: 60px;
}

.row-actions .cell {
    flex: 1;
}

/* Measure popup */
.measure {
    left: 1728px;
    top: 252px;
    width: 200px;
    padding: 0 7px 5px 6px;
    background: linear-gradient(#68a858 0, #303438 14%, #30343a 28%, #68a058 38%, #68a058 48%, #14181c 52%, #14181c 60%, #58904c 68%, #58904c 78%, #14181c 86%);
}

.measure .win-title {
    height: 29px;
    gap: 6px;
    margin: 0 -7px 0 -6px;
    padding: 0 4px 2px 7px;
    border-radius: 5px 5px 0 0;
    background: linear-gradient(90deg, #70a860 0, #606468 10%, #c0ccd8 35%, #d8e0f0 62%, #888c90 70%, #d0e4f8 78%);
}

.measure .x {
    width: 48px;
    height: 19px;
    margin-left: auto;
    align-self: flex-start;
    border: 1px solid #88a0b4;
    border-top: 0;
    border-radius: 0 0 5px 5px;
    background: #d4e8f8;
    font: 13px/16px "DejaVu Sans", sans-serif;
}

.measure h2 {
    height: 17px;
    margin: 0;
    font-size: 15px;
    line-height: 18px;
    text-align: center;
    background: var(--aqua);
    border-bottom: 1px solid #000;
}

.measure label {
    display: flex;
    align-items: center;
    gap: 6px;
    height: 29px;
    padding-left: 7px;
    background: var(--aqua);
    border: solid #000;
    border-width: 0 1px 2px;
    white-space: nowrap;
}

.measure input {
    appearance: none;
    flex: none;
    width: 11px;
    height: 11px;
    border: 2px solid;
    border-color: #c8f8f0 #4f8080 #4f8080 #c8f8f0;
    transform: rotate(45deg);
}

.measure input:checked {
    background: #c0004c;
    border-color: #4f8080 #f0ffff #f0ffff #4f8080;
}

.close-cell {
    height: 30px;
    margin-top: 31px;
}

/* Taskbar */
.taskbar {
    flex: none;
    height: 40px;
    display: flex;
    gap: 3px;
    padding-left: 6px;
    border-top: 1px solid #284868;
    background:
        linear-gradient(rgba(255, 255, 255, .35), transparent 30%),
        linear-gradient(90deg, #2c6090 0, #5898c0 6%, #4c94c8 45%, #2c84c8 58%, #2474bc 70%, #1c5898 85%, #204878 90%, #183860 100%);
    color: #fff;
}

.start {
    flex: none;
    width: 42px;
    height: 38px;
    margin-right: 9px;
    border-radius: 50%;
    background: radial-gradient(circle at 50% 75%, #60c0e8, #205080 60%, #88a8c0);
}

.start svg {
    width: 26px;
    height: 26px;
    margin: auto;
}

.task {
    flex: none;
    width: 59px;
    border: 1px solid rgba(255, 255, 255, .65);
    border-radius: 3px;
    background: linear-gradient(135deg, rgba(255, 255, 255, .5), rgba(255, 255, 255, .12));
}

.task svg {
    width: 34px;
    height: 34px;
    margin: auto;
}

.task.active {
    background: linear-gradient(135deg, #f4f8fc, #b8d0e4);
}

.task.stack {
    width: 53px;
    margin-right: 6px;
    box-shadow: 3px 0 0 -1px #4c84ac, 4px 0 0 -1px #c0d8e8, 6px 0 0 -1px #4c84ac, 7px 0 0 -1px #c0d8e8;
}

.tray {
    display: flex;
    align-items: center;
    gap: 8px;
    margin-left: auto;
    font: 12px/19px var(--ui);
}

.tray svg {
    margin-bottom: 4px;
}

.tray .flag {
    margin-left: 2px;
}

.tray-q {
    font: bold 12px "Liberation Sans", sans-serif;
    fill: #fff;
}

.time {
    display: flex;
    flex-direction: column;
    align-items: center;
    margin-left: 6px;
}

.peek {
    width: 14px;
    height: 38px;
    margin-left: -2px;
    border: 1px solid #7c94ac;
    background: linear-gradient(135deg, #6c8cac, #183050);
}
```
